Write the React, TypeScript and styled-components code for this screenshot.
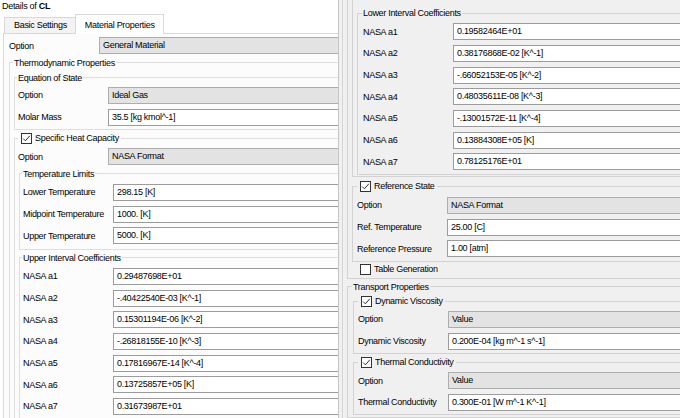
import React from 'react';
import styled, { createGlobalStyle } from 'styled-components';

const GlobalStyle = createGlobalStyle`
    html, body {
        margin: 0;
        padding: 0;
    }
    body {
        font-family: 'Liberation Sans', Arial, sans-serif;
        font-size: 9px;
        letter-spacing: -0.3px;
        color: #000000;
        background: #f0f0f0;
    }
`;

type FieldKind = 'select' | 'input';

type RowData = {
    label: string;
    value: string;
    kind?: FieldKind;
};

const upperCoefficients: RowData[] = [
    { label: 'NASA a1', value: '0.29487698E+01' },
    { label: 'NASA a2', value: '-.40422540E-03 [K^-1]' },
    { label: 'NASA a3', value: '0.15301194E-06 [K^-2]' },
    { label: 'NASA a4', value: '-.26818155E-10 [K^-3]' },
    { label: 'NASA a5', value: '0.17816967E-14 [K^-4]' },
    { label: 'NASA a6', value: '0.13725857E+05 [K]' },
    { label: 'NASA a7', value: '0.31673987E+01' },
];

const lowerCoefficients: RowData[] = [
    { label: 'NASA a1', value: '0.19582464E+01' },
    { label: 'NASA a2', value: '0.38176868E-02 [K^-1]' },
    { label: 'NASA a3', value: '-.66052153E-05 [K^-2]' },
    { label: 'NASA a4', value: '0.48035611E-08 [K^-3]' },
    { label: 'NASA a5', value: '-.13001572E-11 [K^-4]' },
    { label: 'NASA a6', value: '0.13884308E+05 [K]' },
    { label: 'NASA a7', value: '0.78125176E+01' },
];

const temperatureLimits: RowData[] = [
    { label: 'Lower Temperature', value: '298.15 [K]' },
    { label: 'Midpoint Temperature', value: '1000. [K]' },
    { label: 'Upper Temperature', value: '5000. [K]' },
];

const PropertyRow = ({ label, value, kind = 'input' }: RowData) => (
    <Row>
        <Label>{label}</Label>
        <Field $kind={kind}>{value}</Field>
    </Row>
);

const Check = ({ checked }: { checked: boolean }) => (
    <Box>
        {checked && (
            <svg width='9' height='9' viewBox='0 0 9 9'>
                <polyline points='1.2,4.6 3.4,6.8 7.8,1.8' fill='none' stroke='#2b2b2b' strokeWidth='1' />
            </svg>
        )}
    </Box>
);

const CheckLegend = ({ text, checked }: { text: string; checked: boolean }) => (
    <BoxLegend>
        <Check checked={checked} />
        <span>{text}</span>
    </BoxLegend>
);

export default function App() {
    return (
        <>
            <GlobalStyle />
            <Screen>
                <LeftPanel>
                    <Title>
                        Details of <b>CL</b>
                    </Title>
                    <TabBar>
                        <Tab>Basic Settings</Tab>
                        <Tab $active>Material Properties</Tab>
                    </TabBar>
                    <Pane>
                        <PropertyRow label='Option' value='General Material' kind='select' />

                        <Group $pad={4}>
                            <Legend>Thermodynamic Properties</Legend>

                            <Group $top={3} $pad={3} $padTop={1} $padBottom={1}>
                                <Legend>Equation of State</Legend>
                                <PropertyRow label='Option' value='Ideal Gas' kind='select' />
                                <PropertyRow label='Molar Mass' value='35.5 [kg kmol^-1]' />
                            </Group>

                            <Group $top={2} $pad={3} $padTop={1}>
                                <CheckLegend text='Specific Heat Capacity' checked />
                                <PropertyRow label='Option' value='NASA Format' kind='select' />

                                <Group $inset={1} $pad={3} $padTop={2} $padBottom={2}>
                                    <Legend>Temperature Limits</Legend>
                                    {temperatureLimits.map((row) => (
                                        <PropertyRow key={row.label} {...row} />
                                    ))}
                                </Group>

                                <Group $top={2} $inset={1} $pad={3} $padTop={2} $padBottom={2}>
                                    <Legend>Upper Interval Coefficients</Legend>
                                    {upperCoefficients.map((row) => (
                                        <PropertyRow key={row.label} {...row} />
                                    ))}
                                </Group>
                            </Group>
                        </Group>
                    </Pane>
                </LeftPanel>

                <Splitter />

                <RightPanel>
                    <Scrolled>
                        <ContinuedGroup $padBottom={2}>
                            <ContinuedGroup $inset={0} $padTop={7} $padBottom={1}>
                                <Group $pad={5} $padTop={2} $padBottom={1} $dark>
                                    <Legend>Lower Interval Coefficients</Legend>
                                    {lowerCoefficients.map((row) => (
                                        <PropertyRow key={row.label} {...row} />
                                    ))}
                                </Group>
                            </ContinuedGroup>

                            <Group $top={3} $pad={4} $padTop={2} $padBottom={1} $dark>
                                <CheckLegend text='Reference State' checked />
                                <PropertyRow label='Option' value='NASA Format' kind='select' />
                                <PropertyRow label='Ref. Temperature' value='25.00 [C]' />
                                <PropertyRow label='Reference Pressure' value='1.00 [atm]' />
                            </Group>

                            <CheckRow>
                                <Check checked={false} />
                                <span>Table Generation</span>
                            </CheckRow>
                        </ContinuedGroup>

                        <Group $top={2} $pad={5} $padBottom={2} $dark>
                            <Legend>Transport Properties</Legend>

                            <Group $top={2} $pad={4} $padTop={1} $padBottom={1} $dark>
                                <CheckLegend text='Dynamic Viscosity' checked />
                                <PropertyRow label='Option' value='Value' kind='select' />
                                <PropertyRow label='Dynamic Viscosity' value='0.200E-04 [kg m^-1 s^-1]' />
                            </Group>

                            <Group $top={2} $pad={4} $padTop={1} $padBottom={1} $dark>
                                <CheckLegend text='Thermal Conductivity' checked />
                                <PropertyRow label='Option' value='Value' kind='select' />
                                <PropertyRow label='Thermal Conductivity' value='0.300E-01 [W m^-1 K^-1]' />
                            </Group>
                        </Group>
                    </Scrolled>
                </RightPanel>
            </Screen>
        </>
    );
}

const Screen = styled.div`
    width: 680px;
    height: 418px;
    display: flex;
    overflow: hidden;
    background: #f0f0f0;
`;

const LeftPanel = styled.section`
    width: 338px;
    flex: none;
    display: flex;
    flex-direction: column;
    overflow: hidden;
    background: #ffffff;
    border-right: 1px solid #c6c6c6;
`;

const Title = styled.div`
    flex: none;
    height: 13px;
    line-height: 12px;
    padding-left: 2px;
    white-space: nowrap;

    b {
        font-weight: 700;
    }
`;

const TabBar = styled.div`
    flex: none;
    height: 20px;
    display: flex;
    align-items: flex-end;
    padding-left: 4px;
`;

const Tab = styled.div<{ $active?: boolean }>`
    position: relative;
    z-index: 1;
    box-sizing: border-box;
    white-space: nowrap;
    line-height: 15px;
    border: 1px solid #d9d9d9;
    border-bottom: none;
    padding: ${(p) => (p.$active ? '3px 8px 1px 9px' : '0 8px 0 9px')};
    margin-bottom: ${(p) => (p.$active ? '-1px' : '0')};
    margin-left: ${(p) => (p.$active ? '-1px' : '0')};
    background: ${(p) => (p.$active ? '#ffffff' : '#f3f3f3')};
`;

const Pane = styled.div`
    width: 440px;
    flex: 1 0 auto;
    margin-left: 3px;
    padding: 1px 0 0 5px;
    border: 1px solid #d9d9d9;
    background: #fcfcfc;
`;

const Splitter = styled.div`
    width: 3px;
    flex: none;
    background: #f0f0f0;
`;

const RightPanel = styled.section`
    flex: 1;
    overflow: hidden;
    background: #f0f0f0;
    border-left: 1px solid #d6d6d6;
`;

const Scrolled = styled.div`
    width: 440px;
    padding-left: 4px;
`;

type GroupProps = {
    $top?: number;
    $inset?: number;
    $pad?: number;
    $padTop?: number;
    $padBottom?: number;
    $dark?: boolean;
};

const Group = styled.fieldset<GroupProps>`
    min-width: 0;
    margin: ${(p) => p.$top ?? 0}px 0 0 ${(p) => p.$inset ?? 0}px;
    padding: ${(p) => p.$padTop ?? 0}px 0 ${(p) => p.$padBottom ?? 0}px ${(p) => p.$pad ?? 4}px;
    border: 1px solid ${(p) => (p.$dark ? '#d2d2d2' : '#dedede')};
`;

const ContinuedGroup = styled.div<GroupProps>`
    margin-left: ${(p) => p.$inset ?? 0}px;
    padding: ${(p) => p.$padTop ?? 0}px 0 ${(p) => p.$padBottom ?? 0}px 4px;
    border-left: 1px solid #d2d2d2;
    border-bottom: 1px solid #d2d2d2;
`;

const Legend = styled.legend`
    padding: 0 1px;
    margin-left: -1px;
    line-height: 12px;
    white-space: nowrap;
`;

const BoxLegend = styled.legend`
    display: flex;
    align-items: center;
    gap: 3px;
    height: 13px;
    padding: 0 2px 0 3px;
    white-space: nowrap;
`;

const CheckRow = styled.div`
    display: flex;
    align-items: center;
    gap: 3px;
    height: 13px;
    margin-top: 1px;
    padding-left: 8px;
    white-space: nowrap;
`;

const Box = styled.span`
    width: 11px;
    height: 11px;
    box-sizing: border-box;
    flex: none;
    display: inline-flex;
    align-items: center;
    justify-content: center;
    border: 1px solid #333333;
    background: #ffffff;
`;

const Row = styled.div`
    display: grid;
    grid-template-columns: 90px 1fr;
    align-items: center;
    height: 21.67px;
`;

const Label = styled.span`
    white-space: nowrap;
`;

const Field = styled.div<{ $kind: FieldKind }>`
    height: 17px;
    box-sizing: border-box;
    padding-left: 3px;
    line-height: 15px;
    white-space: nowrap;
    overflow: hidden;
    border: 1px solid ${(p) => (p.$kind === 'select' ? '#adadad' : '#9c9c9c')};
    background: ${(p) => (p.$kind === 'select' ? '#e3e3e3' : '#ffffff')};
`;
